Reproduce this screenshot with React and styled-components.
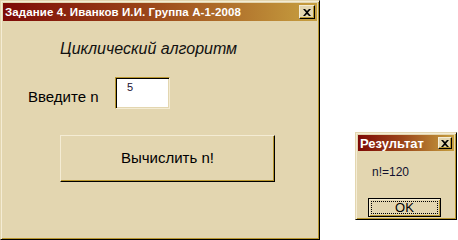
import styled, { createGlobalStyle } from "styled-components"

const GlobalStyle = createGlobalStyle`
  html, body {
    margin: 0;
    padding: 0;
    background: #ffffff;
    font-family: "Liberation Sans", Arial, sans-serif;
  }
`

const face = "#e3d6b0"
const light = "#f4ecd4"
const shadow = "#b8962e"

const Desktop = styled.div`
  display: flex;
  align-items: flex-start;
  width: 458px;
  height: 240px;
`

const Window = styled.div`
  box-sizing: border-box;
  width: ${(p) => p.w}px;
  height: ${(p) => p.h}px;
  margin-left: ${(p) => p.left || 0}px;
  margin-top: ${(p) => p.top || 0}px;
  background: ${face};
  border: 1px solid;
  border-color: ${face} #000 #000 ${face};
  box-shadow: inset 1px 1px 0 ${light}, inset -1px -1px 0 ${shadow};
  padding: 2px;
  display: flex;
  flex-direction: column;
`

const TitleBar = styled.div`
  height: ${(p) => p.h}px;
  flex-shrink: 0;
  display: flex;
  align-items: center;
  justify-content: space-between;
  padding: 0 2px 0 2px;
  background: linear-gradient(90deg, #7e0a06 0%, #9a4418 45%, #c7a040 100%);
  color: #fff;
  font-weight: bold;
  font-size: ${(p) => p.fs}px;
  letter-spacing: ${(p) => p.ls || 0}px;
  white-space: nowrap;
`

const CloseBox = styled.div`
  box-sizing: border-box;
  width: ${(p) => p.w}px;
  height: ${(p) => p.h}px;
  background: ${face};
  border: 1px solid;
  border-color: ${light} #000 #000 ${light};
  box-shadow: inset -1px -1px 0 ${shadow};
  display: flex;
  align-items: center;
  justify-content: center;
`

const Body = styled.div`
  display: flex;
  flex-direction: column;
  align-items: flex-start;
  color: #000;
`

const Heading = styled.div`
  margin: 19px 0 0 57px;
  font-size: 16px;
  font-style: italic;
  line-height: 18px;
  color: #111;
`

const InputRow = styled.div`
  display: flex;
  align-items: center;
  margin: 19px 0 0 25px;
`

const Label = styled.span`
  font-size: 15px;
  width: 87px;
  padding-top: 7px;
`

const TextBox = styled.div`
  box-sizing: border-box;
  width: 55px;
  height: 32px;
  background: #fff;
  border: 1px solid;
  border-color: ${shadow} ${light} ${light} ${shadow};
  box-shadow: inset 1px 1px 0 #000, inset -1px -1px 0 ${face};
  padding: 3px 0 0 11px;
  font-size: 11px;
  color: #1a1030;
`

const CalcButton = styled.div`
  box-sizing: border-box;
  margin: 26px 0 0 57px;
  width: 215px;
  height: 47px;
  background: ${face};
  border: 1px solid;
  border-color: ${light} #000 #000 ${light};
  box-shadow: inset -1px -1px 0 ${shadow};
  display: flex;
  align-items: center;
  justify-content: center;
  font-size: 15px;
  padding-bottom: 2px;
`

const ResultText = styled.div`
  margin: 14px 0 0 14px;
  font-size: 12px;
  color: #101030;
`

const OkButton = styled.div`
  box-sizing: border-box;
  margin: 19px 0 0 10px;
  width: 73px;
  height: 19px;
  border: 1px solid #000;
  background: ${face};
  box-shadow: inset 1px 1px 0 ${light}, inset -1px -1px 0 ${shadow};
  padding: 2px;
  display: flex;
`

const FocusRect = styled.div`
  flex: 1;
  border: 1px dotted #000;
  display: flex;
  align-items: center;
  justify-content: center;
  font-size: 13px;
  line-height: 11px;
`

const Cross = ({ size }) => (
  <svg width={size} height={size - 1} viewBox="0 0 8 7">
    <path d="M0 0h2l2 2 2-2h2L5 3.5 8 7H6L4 5 2 7H0l3-3.5z" fill="#000" />
  </svg>
)

export default function App() {
  return (
    <Desktop>
      <GlobalStyle />
      <Window w={320} h={240}>
        <TitleBar h={18} fs={11.5} ls={0.1}>
          <span>Задание 4. Иванков И.И. Группа А-1-2008</span>
          <CloseBox w={16} h={14}>
            <Cross size={8} />
          </CloseBox>
        </TitleBar>
        <Body>
          <Heading>Циклический алгоритм</Heading>
          <InputRow>
            <Label>Введите n</Label>
            <TextBox>5</TextBox>
          </InputRow>
          <CalcButton>Вычислить n!</CalcButton>
        </Body>
      </Window>
      <Window w={102} h={88} left={35} top={132}>
        <TitleBar h={16} fs={13}>
          <span>Результат</span>
          <CloseBox w={14} h={12}>
            <Cross size={8} />
          </CloseBox>
        </TitleBar>
        <Body>
          <ResultText>n!=120</ResultText>
          <OkButton>
            <FocusRect>OK</FocusRect>
          </OkButton>
        </Body>
      </Window>
    </Desktop>
  )
}
